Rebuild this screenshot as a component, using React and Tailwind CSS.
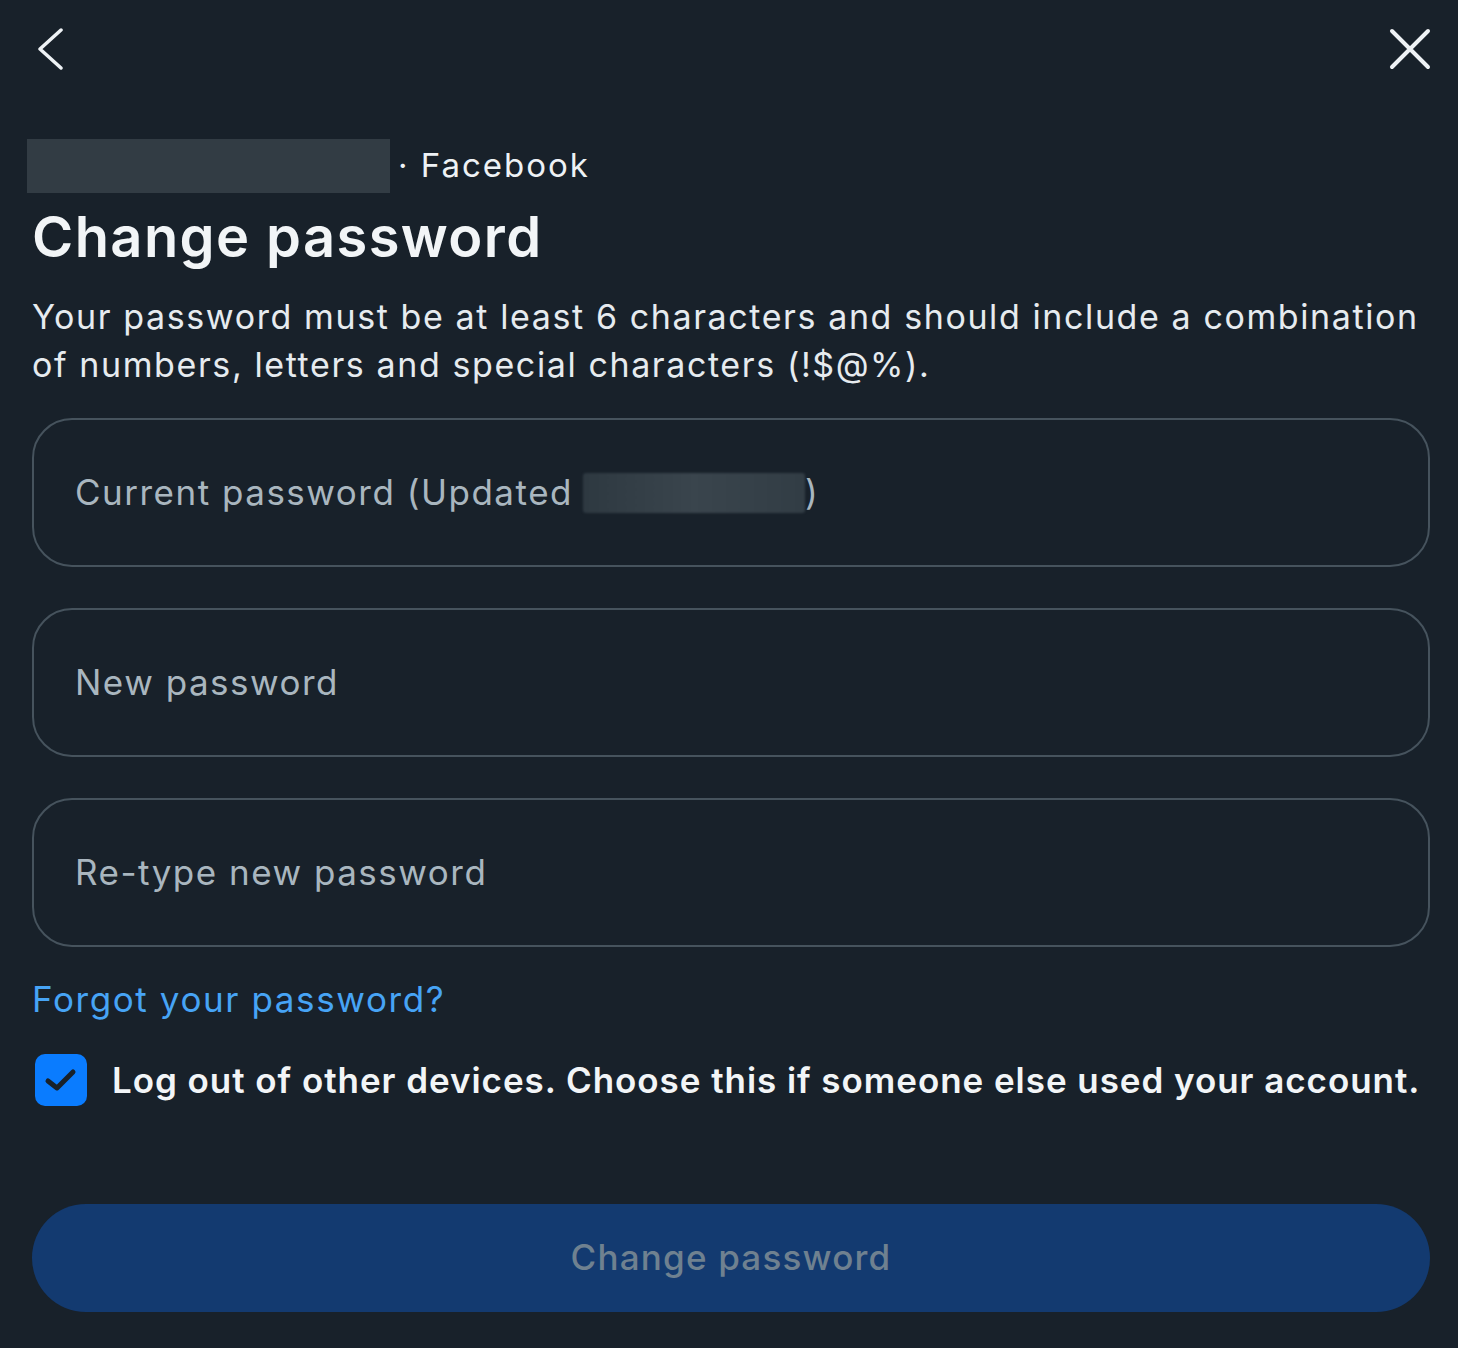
import React from "react";

const font = { fontFamily: 'Inter, "Noto Sans", sans-serif' };

function PasswordField({ children }) {
  return (
    <div className="h-[149px] rounded-[40px] border-2 border-[#46535d] flex items-center px-[41px]">
      <span className="text-[35px] tracking-[1.5px] text-[#a9b6bf] flex items-center">{children}</span>
    </div>
  );
}

export default function App() {
  return (
    <div className="w-[1458px] h-[1348px] bg-[#18212a] text-[#e6ebef] flex flex-col" style={font}>
      <div className="flex items-center justify-between pl-[36px] pr-[26px] pt-[26px] h-[72px]">
        <svg width="30" height="42" viewBox="0 0 30 42" fill="none">
          <path d="M25 2 L4 21 L25 40" stroke="#eef2f5" strokeWidth="3.5" strokeLinecap="round" strokeLinejoin="round" />
        </svg>
        <svg width="44" height="44" viewBox="0 0 44 44" fill="none">
          <path d="M4 4 L40 40 M40 4 L4 40" stroke="#eef2f5" strokeWidth="4" strokeLinecap="round" />
        </svg>
      </div>

      <div className="pl-[32px] pr-[28px] flex flex-col">
        <div className="mt-[67px] flex items-center -ml-[5px]">
          <div className="w-[363px] h-[54px] bg-[#323c44]" />
          <span className="ml-[8px] text-[33px] tracking-[2px] text-[#eef2f5]">· Facebook</span>
        </div>
        <h1 className="text-[56px] font-semibold tracking-[1.4px] leading-[72px] mt-[8px] text-[#f2f5f7]">Change password</h1>
        <p className="text-[34px] tracking-[1.6px] leading-[48px] mt-[20px] text-[#e6ebef]">
          Your password must be at least 6 characters and should include a combination of numbers, letters and special characters (!$@%).
        </p>

        <div className="mt-[29px] flex flex-col gap-[41px]">
          <PasswordField>
            Current password (Updated
            <span className="inline-block w-[222px] h-[40px] ml-[10px] rounded-[3px] bg-gradient-to-r from-[#2e3941] via-[#3a454d] to-[#323d45] blur-[1px]" />
            )
          </PasswordField>
          <PasswordField>New password</PasswordField>
          <PasswordField>Re-type new password</PasswordField>
        </div>

        <a className="mt-[28px] text-[35px] tracking-[1.6px] text-[#47a4f5] leading-[48px]">Forgot your password?</a>

        <label className="mt-[31px] flex items-center gap-[25px]">
          <span className="w-[52px] h-[52px] rounded-[10px] bg-[#0a7cff] ml-[3px] shrink-0">
            <svg width="52" height="52" viewBox="0 0 52 52" fill="none">
              <path d="M13 27 L22 34 L38 18" stroke="#18212a" strokeWidth="5" strokeLinecap="round" strokeLinejoin="round" />
            </svg>
          </span>
          <span className="text-[35px] font-semibold tracking-[0.95px] text-[#f2f5f7]">
            Log out of other devices. Choose this if someone else used your account.
          </span>
        </label>

        <button className="mt-[97px] h-[108px] rounded-full bg-[#133a70] text-[35px] font-medium tracking-[1.2px] text-[#6f8190]">
          Change password
        </button>
      </div>
    </div>
  );
}
